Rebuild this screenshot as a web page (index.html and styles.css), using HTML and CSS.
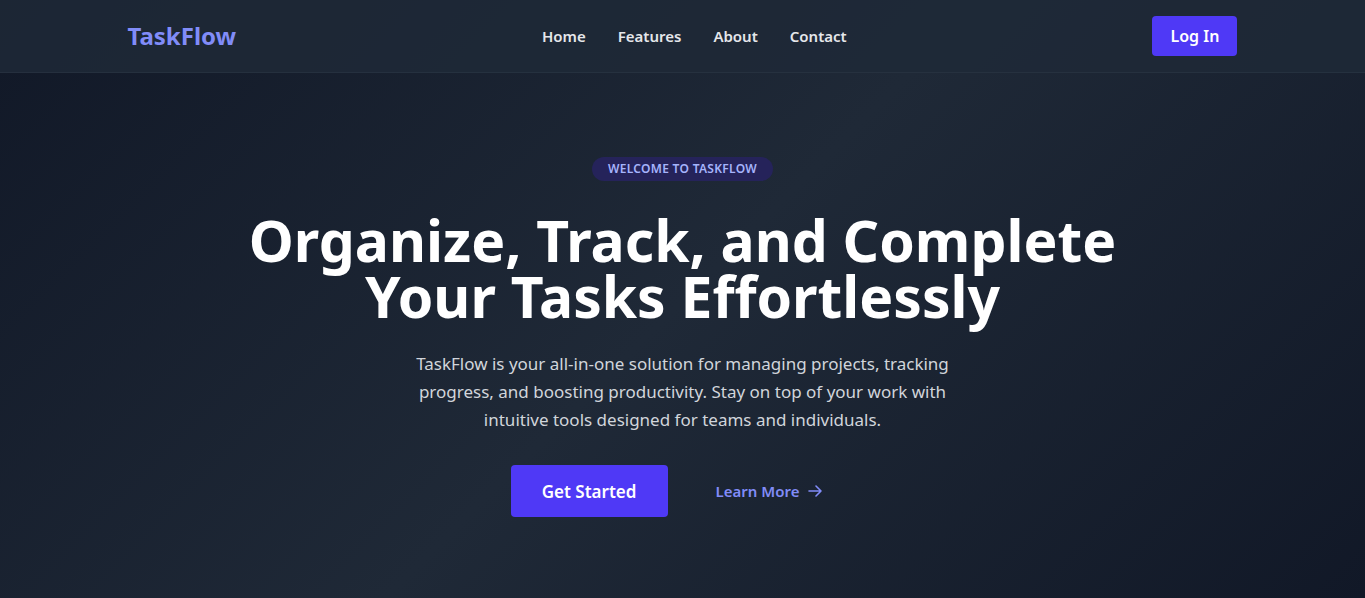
FILE: index.html
```html
<!DOCTYPE html>
<html lang="en">
<head>
<meta charset="utf-8">
<title>TaskFlow</title>
<link rel="stylesheet" href="styles.css">
</head>
<body>
<div class="page">
  <header class="nav">
    <div class="container nav-inner">
      <a class="logo" href="#">TaskFlow</a>
      <nav class="links">
        <a href="#">Home</a>
        <a href="#">Features</a>
        <a href="#">About</a>
        <a href="#">Contact</a>
      </nav>
      <a class="btn btn-login" href="#">Log In</a>
    </div>
  </header>
  <main class="hero">
    <div class="hero-inner">
      <span class="badge">Welcome to TaskFlow</span>
      <h1 class="title">Organize, Track, and Complete<br>Your Tasks Effortlessly</h1>
      <p class="lead">TaskFlow is your all-in-one solution for managing projects, tracking progress, and boosting productivity. Stay on top of your work with intuitive tools designed for teams and individuals.</p>
      <div class="actions">
        <a class="btn btn-primary" href="#">Get Started</a>
        <a class="link-more" href="#">Learn More<svg class="arrow" width="14" height="12" viewBox="0 0 14 12" fill="none" stroke="currentColor" stroke-width="1.6" stroke-linecap="round" stroke-linejoin="round"><path d="M1 6h12M8 1l5 5-5 5"/></svg></a>
      </div>
    </div>
  </main>
</div>
</body>
</html>
```

FILE: styles.css
```css
* { box-sizing: border-box; }
html, body { margin: 0; padding: 0; }
body {
  font-family: "Noto Sans", "Open Sans", sans-serif;
  background: #111827;
  color: #fff;
}
a { text-decoration: none; color: inherit; }
.page {
  min-height: 100vh;
  background: linear-gradient(135deg, #111827 0%, #1f2937 50%, #111827 100%);
}
.nav {
  background: rgba(31, 41, 55, 0.85);
  height: 73px;
  border-bottom: 1px solid rgba(55, 65, 81, 0.35);
}
.container {
  width: 1110px;
  margin: 0 auto;
}
.nav-inner {
  height: 100%;
  display: flex;
  align-items: center;
  justify-content: space-between;
}
.logo {
  color: #818cf8;
  font-size: 24px;
  font-weight: 700;
  margin-top: -1px;
}
.links {
  display: flex;
  gap: 32px;
  margin-top: -1px;
}
.links a {
  color: #e5e7eb;
  font-size: 15px;
  font-weight: 600;
}
.btn {
  display: inline-flex;
  align-items: center;
  justify-content: center;
  background: #4f39f6;
  color: #fff;
  font-weight: 600;
  border-radius: 4px;
}
.btn-login {
  width: 85px;
  height: 40px;
  font-size: 16px;
  margin-top: -1px;
}
.hero {
  padding-top: 84px;
  display: flex;
  justify-content: center;
  height: calc(100vh - 73px);
}
.hero-inner {
  display: flex;
  flex-direction: column;
  align-items: center;
  text-align: center;
}
.badge {
  display: inline-block;
  background: #25235a;
  color: #a5b4fc;
  font-size: 12px;
  font-weight: 600;
  text-transform: uppercase;
  letter-spacing: 0.3px;
  padding: 4px 16px;
  border-radius: 999px;
  line-height: 16px;
}
.title {
  margin: 31px 0 0;
  font-size: 57px;
  line-height: 56px;
  font-weight: 700;
  color: #fff;
}
.lead {
  margin: 26px 0 0;
  max-width: 545px;
  font-size: 17px;
  line-height: 28px;
  color: #d1d5db;
}
.actions {
  margin-top: 31px;
  display: flex;
  align-items: center;
  gap: 16px;
}
.btn-primary {
  width: 157px;
  height: 52px;
  font-size: 17px;
}
.link-more {
  display: inline-flex;
  align-items: center;
  padding: 0 32px;
  color: #818cf8;
  font-size: 15px;
  font-weight: 600;
}
.arrow { margin-left: 9px; }
```
